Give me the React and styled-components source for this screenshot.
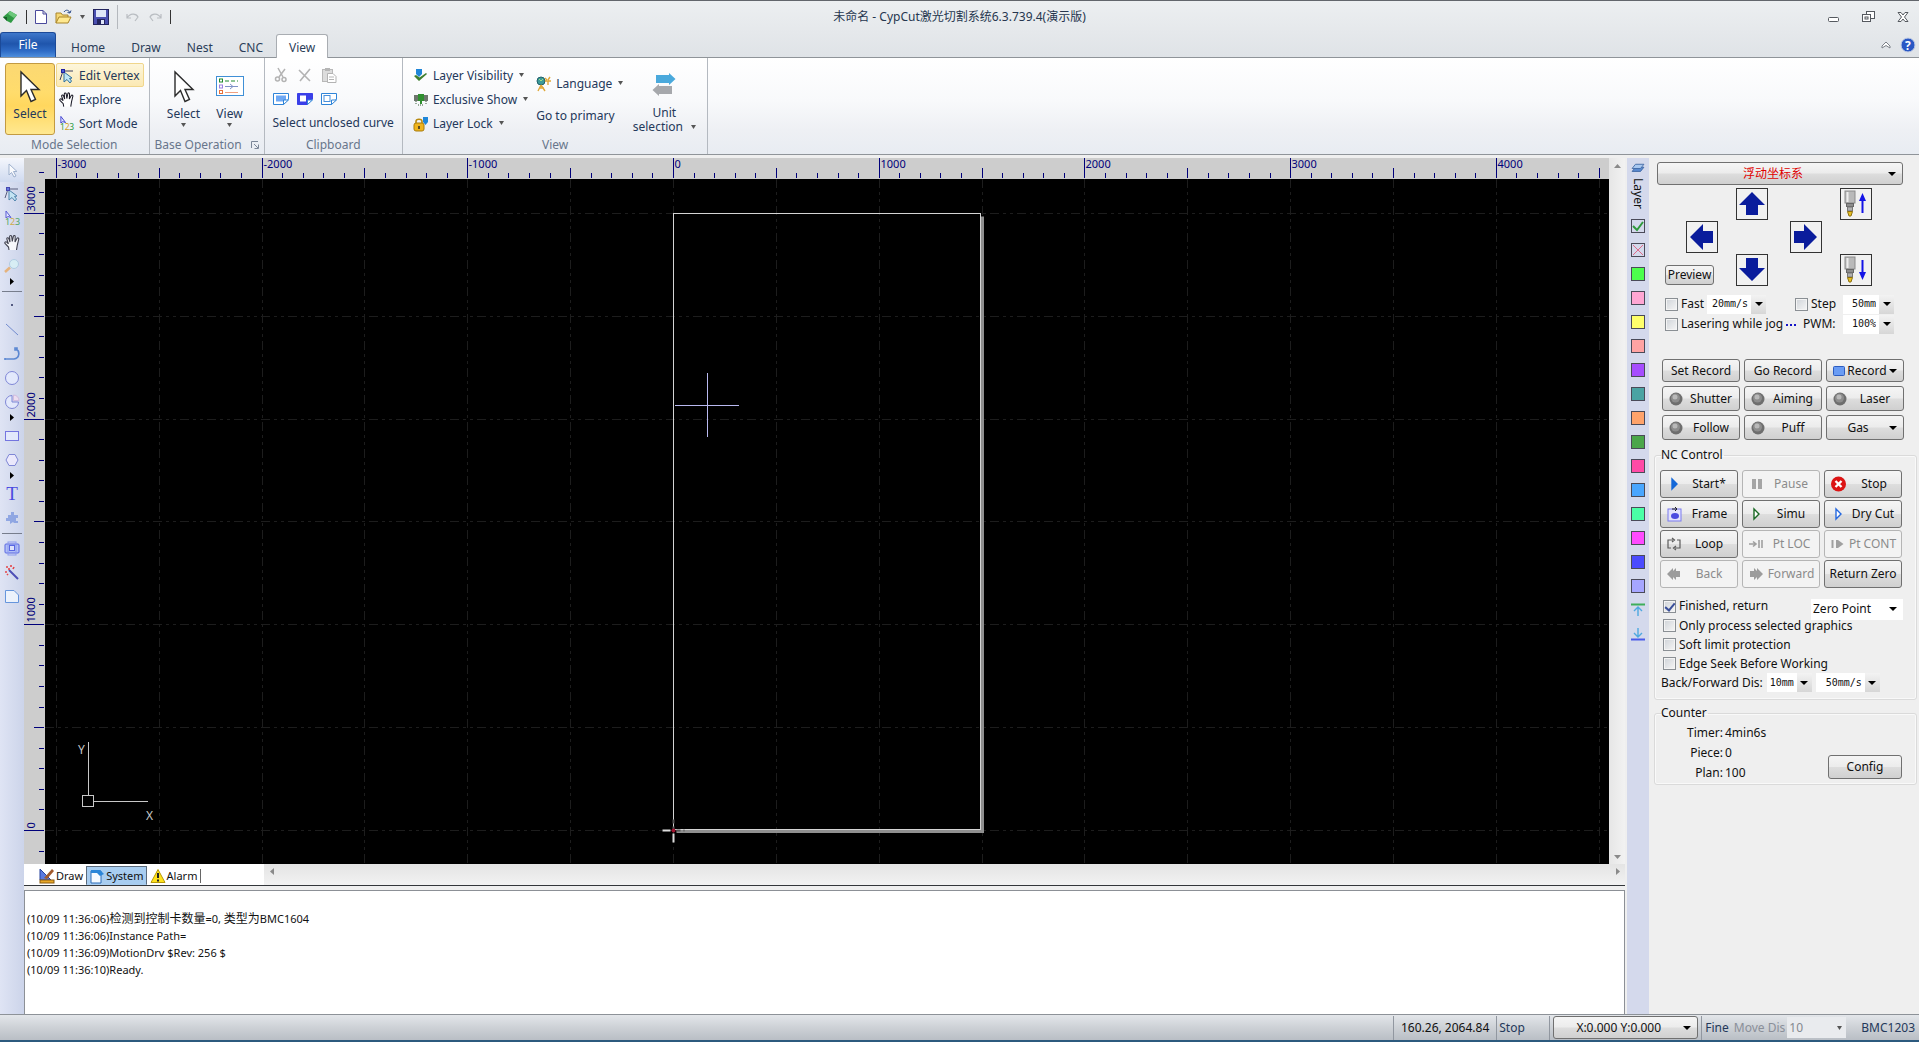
import React from 'react';
import styled, { createGlobalStyle } from 'styled-components';

const GlobalStyle = createGlobalStyle`
  * { box-sizing: border-box; }
  body {
    margin: 0;
    background: #efefef;
  }
  body, button, select, input {
    font-family: 'Noto Sans', 'Noto Sans CJK SC', sans-serif;
    font-size: 12px;
    line-height: 16px;
    color: #111;
  }
  button, select { margin: 0; padding: 0; }
`;

const Window = styled.div`
  display: flex;
  flex-direction: column;
  height: 100vh;
  overflow: hidden;
  border-top: 1px solid #62666c;
`;

/* ---------- title bar ---------- */
const TitleBar = styled.header`
  display: grid;
  grid-template-columns: 1fr auto 1fr;
  align-items: center;
  height: 32px;
  background: linear-gradient(#eceff1, #e5e8eb);
`;
const QuickBar = styled.div`
  display: flex;
  align-items: center;
  gap: 8px;
  padding-left: 2px;
`;
const PlainButton = styled.button`
  display: flex;
  align-items: center;
  justify-content: center;
  border: 0;
  background: none;
  color: #24385a;
`;
const Rule = styled.span`
  width: 1px;
  height: ${props => (props.$faint ? 24 : 14)}px;
  background: ${props => (props.$faint ? '#b4b8bd' : '#333')};
`;
const TitleText = styled.h1`
  margin: 0;
  font-size: 12px;
  font-weight: 400;
  color: #26364f;
`;
const WindowButtons = styled.div`
  display: flex;
  justify-content: flex-end;
  gap: 22px;
  padding-right: 10px;
`;

/* ---------- ribbon ---------- */
const TabRow = styled.nav`
  display: flex;
  align-items: flex-end;
  height: 25px;
  background: linear-gradient(#e5e8eb, #dfe3e7);
  border-bottom: 1px solid #8f9499;
`;
const FileTab = styled.button`
  width: 56px;
  height: 25px;
  border: 1px solid #1c4a98;
  border-bottom: 0;
  border-radius: 3px 3px 0 0;
  background: linear-gradient(#3f78cb, #1f55ac 45%, #2f6cc6 75%, #4f8fdd);
  color: #fff;
  margin-right: 2px;
`;
const Tab = styled.button`
  height: 24px;
  padding: 2px 12px 0;
  margin-bottom: -1px;
  border: 1px solid ${props => (props.$active ? '#a9adb2' : 'transparent')};
  border-bottom: 0;
  border-radius: 3px 3px 0 0;
  background: ${props => (props.$active ? '#fff' : 'none')};
  color: #2b3d58;
`;
const TabTools = styled.div`
  display: flex;
  align-items: center;
  gap: 9px;
  margin-left: auto;
  padding-right: 3px;
  height: 25px;
`;
const Ribbon = styled.section`
  display: flex;
  height: 97px;
  flex: none;
  background: linear-gradient(#fff, #f8f9fb 45%, #eef0f4 75%, #e8ecf2);
  border-bottom: 1px solid #8f9499;
`;
const Group = styled.div`
  display: flex;
  flex-direction: column;
  padding-top: 5px;
  border-right: 1px solid #b4b9c0;
`;
const GroupBody = styled.div`
  display: flex;
  height: 72px;
  padding: 0 ${props => props.$pad}px;
  gap: ${props => props.$gap || 0}px;
`;
const GroupLabel = styled.div`
  display: flex;
  justify-content: center;
  align-items: center;
  gap: 9px;
  height: 19px;
  color: #68768b;
`;
const Stack = styled.div`
  display: flex;
  flex-direction: column;
  justify-content: center;
  align-items: flex-start;
  gap: ${props => props.$gap || 0}px;
`;
const BigButton = styled.button`
  display: flex;
  flex-direction: column;
  align-items: center;
  width: ${props => props.$width}px;
  height: 72px;
  padding-top: 5px;
  border: 1px solid ${props => (props.$on ? '#c29a42' : 'transparent')};
  border-radius: 3px;
  background: ${props =>
    props.$on ? 'linear-gradient(#fbd873, #ffdc6c 40%, #ffd75e 60%, #ffe890)' : 'none'};
  color: #24385a;
`;
const BigIcon = styled.span`
  display: flex;
  align-items: center;
  justify-content: center;
  height: 34px;
  margin-bottom: 2px;
`;
const BigLabel = styled.span`
  display: flex;
  flex-direction: column;
  align-items: center;
  padding-top: ${props => (props.$tight ? 3 : 0)}px;
  line-height: ${props => (props.$tight ? 14 : 18)}px;
`;
const InlineArrow = styled.span`
  display: flex;
  align-items: center;
  gap: 8px;
`;
const SmallButton = styled.button`
  display: flex;
  align-items: center;
  gap: 4px;
  height: 24px;
  padding: 1px 3px 0 2px;
  border: 1px solid ${props => (props.$hot ? '#f0d68c' : 'transparent')};
  border-radius: 2px;
  background: ${props => (props.$hot ? 'linear-gradient(#fdf6dc, #fbe9b4)' : 'none')};
  color: #24385a;
  white-space: nowrap;
`;
const IconSlot = styled.span`
  display: flex;
  align-items: center;
  justify-content: center;
  width: 16px;
`;
const ArrowSlot = styled.span`
  display: flex;
  padding: 0 0 2px 2px;
`;
const IconRow = styled.div`
  display: flex;
  align-items: center;
  gap: 8px;
  height: 24px;
`;

/* ---------- work area ---------- */
const Main = styled.main`
  display: flex;
  flex: 1;
  min-height: 0;
  padding-top: 3px;
  background: #efefef;
`;
const ToolBar = styled.aside`
  width: 24px;
  flex: none;
  display: flex;
  flex-direction: column;
  align-items: center;
  background: linear-gradient(90deg, #dfe4f4, #ccd4ea);
`;
const Tool = styled.button`
  display: flex;
  align-items: center;
  justify-content: center;
  width: 24px;
  height: 24px;
  flex: none;
  border: 0;
  background: ${props => (props.$on ? 'linear-gradient(#f4f6fc, #cfdaf0)' : 'none')};
  > svg { opacity: 0.8; }
`;
const Flyout = styled.span`
  display: flex;
  align-items: flex-start;
  height: 10px;
  flex: none;
`;
const ToolRule = styled.span`
  width: 20px;
  height: 1px;
  flex: none;
  margin: 3px 0 2px;
  background: #777d8c;
`;
const Center = styled.div`
  flex: 1;
  min-width: 0;
  display: flex;
  flex-direction: column;
`;
const Board = styled.div`
  flex: 1;
  min-height: 0;
  display: grid;
  grid-template-columns: 21px 1fr 16px;
  grid-template-rows: 21px 1fr;
`;
const Ruler = styled.svg`
  display: block;
  width: 100%;
  height: 100%;
  background: #cdcdcd;
  grid-row: ${props => (props.$side ? '1 / 3' : '1')};
  font-size: 11px;
  overflow: hidden;
`;
const Drawing = styled.svg`
  display: block;
  width: 100%;
  height: 100%;
  background: #000;
  overflow: hidden;
`;
const VScroll = styled.div`
  grid-column: 3;
  grid-row: 1 / 3;
  display: flex;
  flex-direction: column;
  justify-content: space-between;
  align-items: center;
  padding: 6px 0 5px;
  background: linear-gradient(90deg, #e6e6e6, #f2f2f2);
`;
const SheetRow = styled.div`
  display: flex;
  flex: none;
  height: 22px;
  border-bottom: 1px solid #33363a;
`;
const Sheets = styled.div`
  display: flex;
  width: 240px;
  padding: 2px 0 0 12px;
  background: #fff;
`;
const Sheet = styled.button`
  display: flex;
  align-items: center;
  gap: 1px;
  padding: 0 2px;
  border: 1px solid transparent;
  border-color: ${props => (props.$on ? '#5b6b7c #5b6b7c transparent' : 'transparent')};
  background: ${props => (props.$on ? '#a8cdf0' : 'none')};
  font-size: 11px;
`;
const SheetEnd = styled.span`
  width: 1px;
  height: 14px;
  margin-top: 3px;
  background: #666;
`;
const HScroll = styled.div`
  flex: 1;
  display: flex;
  justify-content: space-between;
  padding: 4px 5px 0 6px;
  background: linear-gradient(#e4e4e4, #f2f2f2);
`;
const Log = styled.div`
  height: 124px;
  flex: none;
  margin-top: 4px;
  padding: 19px 0 0 2px;
  border: 1px solid #8c9096;
  border-bottom: 0;
  background: #fff;
`;
const LogLine = styled.p`
  margin: 0;
  font-size: 11px;
  line-height: 17px;
  white-space: pre;
`;
const Han = styled.span`
  font-size: 12px;
`;

/* ---------- layers ---------- */
const LayerBar = styled.aside`
  display: flex;
  flex-direction: column;
  align-items: center;
  gap: 10px;
  width: 22px;
  flex: none;
  margin-left: 2px;
  padding-top: 5px;
  background: #d4d9ec;
`;
const LayerHead = styled.div`
  display: flex;
  flex-direction: column;
  align-items: center;
  gap: 5px;
  height: 46px;
`;
const LayerTitle = styled.span`
  writing-mode: vertical-rl;
  line-height: 14px;
`;
const LayerButton = styled.button`
  display: flex;
  align-items: center;
  justify-content: center;
  width: 14px;
  height: 14px;
  flex: none;
  border: ${props => (props.$bare ? '0' : '1px solid #4a4a58')};
  background: ${props => props.$color || 'none'};
`;

/* ---------- control panel ---------- */
const Panel = styled.aside`
  width: 270px;
  flex: none;
  padding: 4px 2px 0 5px;
`;
const face = 'linear-gradient(#f5f5f5, #ececec 48%, #dddddd 52%, #d0d0d0)';
const ComboBox = styled.div`
  display: grid;
  grid-template-columns: 1fr 20px;
  align-items: center;
  flex: none;
  height: ${props => props.$height}px;
  width: ${props => props.$width}px;
  margin: ${props => props.$margin || 0};
  border: ${props => (props.$flat ? '0' : '1px solid #707070')};
  border-radius: ${props => (props.$flat ? 0 : 3)}px;
  background: ${props => (props.$flat ? props.$fill || '#fff' : face)};
  > select {
    grid-area: 1 / 1 / 2 / 3;
    appearance: none;
    width: 100%;
    height: 100%;
    border: 0;
    outline: 0;
    padding: 0 ${props => (props.$flat ? '20px 0 2px' : '14px 0 0')};
    background: none;
    color: ${props => props.$ink || '#111'};
    text-align-last: ${props => (props.$flat ? 'left' : 'center')};
  }
  > svg {
    grid-area: 1 / 2;
    justify-self: center;
    pointer-events: none;
  }
`;
const UnitBox = styled.div`
  display: grid;
  grid-template-columns: 1fr 15px;
  width: ${props => props.$width}px;
  height: 19px;
  background: #fff;
  > select {
    grid-area: 1 / 1 / 2 / 3;
    appearance: none;
    width: 100%;
    border: 0;
    padding: 0 18px 0 0;
    background: none;
    font-family: 'DejaVu Sans Mono', monospace;
    font-size: 10px;
    text-align-last: right;
  }
  > span {
    grid-area: 1 / 2;
    display: flex;
    align-items: center;
    justify-content: center;
    background: linear-gradient(#f3f3f3, #d6d6d6);
    pointer-events: none;
  }
`;
const JogGrid = styled.div`
  display: grid;
  grid-template-columns: 21px 50px 54px 50px 32px;
  grid-auto-rows: 33px;
  margin: 3px 0 7px 11px;
`;
const JogButton = styled.button`
  grid-column: ${props => props.$col};
  grid-row: ${props => props.$row};
  display: flex;
  align-items: center;
  justify-content: center;
  width: 32px;
  height: 32px;
  border: 1px solid #333;
  background: #f1f1f1;
`;
const PreviewButton = styled.button`
  grid-column: 1 / 3;
  grid-row: 3;
  align-self: end;
  width: 49px;
  height: 20px;
  margin-bottom: 2px;
  border: 1px solid #707070;
  border-radius: 3px;
  background: ${face};
`;
const JogOptions = styled.div`
  display: grid;
  grid-template-columns: 42px 88px 48px 51px;
  grid-auto-rows: 20px;
  align-items: center;
  margin: 0 0 25px 11px;
`;
const WideCell = styled.div`
  grid-column: 1 / 3;
  display: flex;
  align-items: center;
  gap: 3px;
`;
const MoreButton = styled.button`
  display: flex;
  border: 0;
  background: none;
`;
const PwmLabel = styled.label`
  padding-left: 8px;
`;
const Line = styled.div`
  display: flex;
  align-items: center;
  height: ${props => props.$height || 19}px;
  margin-top: ${props => props.$top || 0}px;
  padding-left: ${props => props.$indent || 0}px;
  gap: ${props => props.$gap || 0}px;
  white-space: nowrap;
`;
const Spacer = styled.span`
  flex: 1;
`;
const CheckLabel = styled.label`
  display: flex;
  align-items: center;
  gap: 3px;
  white-space: nowrap;
  > input {
    appearance: none;
    display: grid;
    place-items: center;
    width: 13px;
    height: 13px;
    margin: 0;
    border: 1px solid #8a8f94;
    background: linear-gradient(135deg, #cfd3d8, #f6f6f6);
    box-shadow: inset 0 0 0 1px #f4f4f4;
  }
  > input:checked::after {
    content: '';
    width: 4px;
    height: 8px;
    margin-bottom: 2px;
    border: solid #3a4f9a;
    border-width: 0 2px 2px 0;
    transform: rotate(40deg);
  }
`;
const ButtonGrid = styled.div`
  display: grid;
  grid-template-columns: repeat(3, 78px);
  gap: ${props => props.$gap}px 4px;
  padding-left: ${props => props.$indent}px;
`;
const PushButton = styled.button`
  display: flex;
  align-items: center;
  height: ${props => props.$height}px;
  padding: 0 ${props => (props.$drop ? 6 : 0)}px 0 ${props => (props.$icon ? 6 : 0)}px;
  border: 1px solid #707070;
  border-radius: 3px;
  background: ${face};
  white-space: nowrap;
  > span {
    flex: 1;
    text-align: center;
  }
  > svg { flex: none; }
  &:disabled {
    border-color: #b5b5b5;
    background: #f3f3f3;
    color: #8b8b8b;
  }
`;
const ConfigButton = styled(PushButton)`
  width: 74px;
  margin-bottom: 2px;
`;
const Box = styled.fieldset`
  margin: ${props => props.$top}px 0 0;
  padding: 0 0 ${props => props.$bottom}px;
  min-width: 0;
  border: 1px solid #dadada;
  border-radius: 3px;
  box-shadow: inset 0 0 0 1px #f9f9f9;
  > legend {
    margin-left: 6px;
    padding: 0 1px 0 0;
  }
`;
const NcBody = styled.div`
  padding-top: 7px;
`;
const Counts = styled.dl`
  display: grid;
  grid-template-columns: 68px 1fr;
  gap: 4px 2px;
  margin: 0;
  flex: 1;
  > dt { text-align: right; }
  > dd { margin: 0; }
`;
const CounterBody = styled.div`
  display: flex;
  align-items: flex-end;
  padding: 4px 14px 0 0;
`;

/* ---------- status bar ---------- */
const StatusBar = styled.footer`
  display: flex;
  flex: none;
  height: 28px;
  justify-content: flex-end;
  align-items: center;
  padding-right: 4px;
  border-top: 1px solid #8d9298;
  border-bottom: 2px solid #2c5a7e;
  background: linear-gradient(#e3e6ea, #cdd1d6 50%, #b9bec5);
  color: #24385a;
  white-space: nowrap;
`;
const StatusCell = styled.span`
  display: flex;
  align-items: center;
  height: 24px;
  min-width: ${props => props.$width}px;
  padding: 0 ${props => props.$pad}px;
  border-left: 1px solid #9197a0;
  color: ${props => (props.$dark ? '#111' : 'inherit')};
`;
const Dim = styled.label`
  margin: 0 2px;
  color: #8a8f99;
`;
const MoveBox = styled(ComboBox)`
  grid-template-columns: 1fr 14px;
  margin-right: 15px;
`;

/* ---------- drawings ---------- */
const Icon = ({ w = 16, h = 16, children }) => (
  <svg width={w} height={h} viewBox={`0 0 ${w} ${h}`} fill="none" aria-hidden="true">
    {children}
  </svg>
);
const Down = ({ color = '#000', w = 7 }) => (
  <Icon w={w} h={4}><path d={`M0 0H${w}L${w / 2} 4Z`} fill={color} /></Icon>
);
const Cursor = () => (
  <Icon w={22} h={33}>
    <path d="M2 2V26L7.5 20.5L12 31.5L16.5 29.5L12 19.5H20Z" fill="#fff" stroke="#2b2b2b" strokeWidth="1.4" />
  </Icon>
);
const VertexIcon = () => (
  <Icon>
    <path d="M4 3L1 12M4 3H14" stroke="#3a3f60" />
    <path d="M5 4V14L8 11.5L11 15L12.5 13L10.5 10.5L13 10Z" fill="#bfe6f5" stroke="#2f6f9c" />
    <rect x="2.5" y="1.5" width="3" height="3" fill="#4a62d8" stroke="#2222a0" />
  </Icon>
);
const HandIcon = () => (
  <Icon w={17} h={17}>
    <path
      d="M5 16L4.5 13L1 9.5C0.3 8 2 7.2 3 8.3L4.4 9.8L2.8 5C2.6 3.5 4.3 3.2 4.8 4.6L6 8L5.6 2.6C5.7 1.2 7.4 1.2 7.7 2.6L8.3 7.5L9.4 2.2C9.8 1 11.3 1.4 11.2 2.8L11 8L13 4.3C13.8 3.3 15 4 14.7 5.3L13.3 11L12.5 16"
      fill="#fff" stroke="#1b1b28" strokeWidth="1.1"
    />
  </Icon>
);
const SortIcon = () => (
  <Icon w={17} h={17}>
    <path d="M2 1V8L4 6.5L7 7.5Z" fill="#e8ecff" stroke="#3b3bd0" />
    <g fontFamily="Noto Sans" fontSize="9">
      <text x="1" y="15" fill="#2e9a3c">1</text>
      <text x="6" y="15" fill="#d0a020">2</text>
      <text x="11" y="15" fill="#2e9a3c">3</text>
    </g>
  </Icon>
);
const ViewIcon = () => (
  <Icon w={28} h={20}>
    <rect x="0.5" y="0.5" width="27" height="19" fill="#fff" stroke="#3f8fd6" />
    <rect x="3.5" y="3" width="3" height="3" stroke="#1f8a2c" />
    <rect x="3.5" y="9" width="3" height="3" stroke="#9a7fe0" />
    <rect x="3.5" y="14.5" width="3" height="3" stroke="#e8703a" />
    <path d="M9 5H22" stroke="#1f8a2c" strokeDasharray="4 2" />
    <path d="M9 10.5H22M14 8L17 10.5L14 13" stroke="#7f93c8" />
    <path d="M9 16.5H22" stroke="#f0a080" />
  </Icon>
);
const Scissors = () => (
  <Icon>
    <path d="M5 1L10 10M12 2L6 10" stroke="#b3b3b3" strokeWidth="1.5" />
    <circle cx="4.5" cy="12" r="2" stroke="#b3b3b3" strokeWidth="1.5" />
    <circle cx="11" cy="12.5" r="2" stroke="#b3b3b3" strokeWidth="1.5" />
  </Icon>
);
const CrossIcon = () => (
  <Icon><path d="M2 3L13 14M13 2L3 14" stroke="#b3b3b3" strokeWidth="1.6" /></Icon>
);
const Paste = () => (
  <Icon>
    <rect x="1.5" y="2.5" width="10" height="12" fill="#dcdcdc" stroke="#b8b8b8" />
    <rect x="4" y="1" width="5" height="3" fill="#b5b5b5" />
    <path d="M6.5 6.5H12L15 9.5V15.5H6.5Z" fill="#fff" stroke="#b3b3b3" />
    <path d="M8 10H13M8 12.5H13" stroke="#b5b5b5" />
  </Icon>
);
const PageIcon = ({ kind }) => (
  <Icon w={16} h={12}>
    <path d="M.5 .5H15.5V6L10.5 11.5H.5Z" fill={kind === 'solid' ? '#3a3fe8' : '#fff'} stroke={kind === 'solid' ? '#3a3fe8' : '#2f84d8'} />
    <rect x="3" y="2.5" width={kind === 'fill' ? 10 : 6} height="6" fill={kind === 'fill' ? '#6ea8f4' : '#fff'} stroke={kind === 'line' ? '#4a90dc' : 'none'} />
    <path d="M10.5 11.5V7H15.5Z" fill="#fff" stroke="#2f84d8" />
  </Icon>
);
const VisibilityIcon = () => (
  <Icon>
    <path d="M3 1H9V6L6 9L3 6Z" fill="#1f86d8" />
    <path d="M1 8L6 13L14 6L13 5L6.5 9.5L3 7Z" fill="#3f7f2f" />
  </Icon>
);
const TreesIcon = () => (
  <Icon>
    <path d="M1 3H5V9H1ZM11 3H15V9H11Z" fill="#6d756d" />
    <path d="M5 2H11V9H9V12H7V9H5Z" fill="#2f8f2f" />
    <path d="M3 9V12M13 9V12M5 13H11" stroke="#3b5f3b" strokeDasharray="1 1" />
  </Icon>
);
const LockIcon = () => (
  <Icon>
    <path d="M10 1H15V6L12.5 9L10 6Z" fill="#1f86d8" />
    <path d="M3 8V5.5C3 2.5 9 2.5 9 5.5V8" stroke="#b98a10" strokeWidth="1.6" />
    <rect x="1" y="7" width="10" height="8" rx="2" fill="#f0b41c" stroke="#a97c0c" />
    <path d="M6 10V13" stroke="#222" strokeWidth="1.4" />
  </Icon>
);
const LanguageIcon = () => (
  <Icon>
    <circle cx="5" cy="5" r="4" fill="#3c9a9a" stroke="#22606a" />
    <path d="M3 3L5 5L7 3" stroke="#9be08a" />
    <path d="M9 2L11 4M14 1L12 4M9 5H15M12 5V9M5 9L2 15M5 9L9 15M3 12H8" stroke="#e0a83a" strokeWidth="1.4" />
  </Icon>
);
const UnitIcon = () => (
  <Icon w={24} h={26}>
    <path d="M4 3H17V1L23.5 7L17 13V11H4Z" fill="#4aa9dc" />
    <path d="M20 14H7V12L.5 18L7 24V22H20Z" fill="#a6a8ac" />
  </Icon>
);
const LogoIcon = () => (
  <Icon>
    <path d="M1 8L8 2L15 6L9 14L5 12Z" fill="#2f9a44" />
    <path d="M8 2L15 6L12 9L6 5Z" fill="#6cc87c" />
    <path d="M1 8L5 12V8Z" fill="#17602a" />
  </Icon>
);
const NewIcon = () => (
  <Icon w={12} h={14}>
    <path d="M.5 .5H8L11.5 4V13.5H.5ZM8 .5V4H11.5" fill="#fff" stroke="#4a4a9c" />
  </Icon>
);
const OpenIcon = () => (
  <Icon w={17}>
    <path d="M1 14V4H6L7.5 6H13V8" fill="#f4d774" stroke="#a8842a" />
    <path d="M1 14L4 8H16L13 14Z" fill="#ffe990" stroke="#a8842a" />
    <path d="M9 3C11 0 14 1 15 4M15 4L12.5 3.5M15 4L16 1.5" stroke="#2a4a8a" />
  </Icon>
);
const SaveIcon = () => (
  <Icon>
    <rect x=".5" y=".5" width="15" height="15" fill="#4a4fb0" stroke="#23245e" />
    <rect x="3" y="1" width="10" height="7" fill="#dfe6f8" />
    <rect x="4" y="10" width="8" height="5" fill="#23245e" />
    <rect x="8" y="11" width="3" height="4" fill="#dfe6f8" />
  </Icon>
);
const UndoIcon = ({ flip }) => (
  <Icon w={14} h={10}>
    <path d={flip ? 'M13 2V6H9M13 6C10 1 4 1 2 5L5 9' : 'M1 2V6H5M1 6C4 1 10 1 12 5L9 9'} stroke="#b9bdc2" strokeWidth="1.2" />
  </Icon>
);

const arrows = {
  up: 'M13 0L26 13H19V23H7V13H0Z',
  down: 'M13 23L26 10H19V0H7V10H0Z',
  left: 'M0 13L13 0V7H23V19H13V26Z',
  right: 'M23 13L10 0V7H0V19H10V26Z',
};
const JogArrow = ({ dir }) => (
  <Icon w={26} h={26}>
    <path d={arrows[dir]} fill="#0a1c9c" transform={dir === 'up' || dir === 'down' ? 'translate(0 1)' : 'translate(1 0)'} />
  </Icon>
);
const Nozzle = ({ up }) => (
  <Icon w={24} h={28}>
    <rect x="1" y="1" width="10" height="12" fill="#b9b9b9" stroke="#8b8b8b" />
    <path d="M3.5 2V12" stroke="#ededed" strokeWidth="2" />
    <rect x="2.5" y="13.5" width="7" height="3" fill="#8d8d8d" stroke="#666" />
    <rect x="3.5" y="17" width="5" height="4" fill="#b0b0b0" stroke="#777" />
    <path d="M3.5 21.5H8.5L7 26H5Z" fill="#e6be22" stroke="#8d7010" />
    <path d={up ? 'M18.5 6V23' : 'M18.5 4V21'} stroke="#1414e6" strokeWidth="2" />
    <path d={up ? 'M18.5 3L22 11H15Z' : 'M18.5 24L22 16H15Z'} fill="#1414e6" />
  </Icon>
);
const Ball = () => (
  <Icon w={14} h={14}>
    <circle cx="7" cy="7" r="6.5" fill="#6e6e6e" />
    <circle cx="6.5" cy="6" r="4.5" fill="#8d8d8d" />
    <circle cx="6" cy="5" r="2.5" fill="#b9b9b9" />
  </Icon>
);
const Play = ({ color, solid }) => (
  <Icon w={14} h={14}><path d="M5 2V12L10 7Z" stroke={color} strokeWidth="1.4" fill={solid ? color : '#fff'} /></Icon>
);
const PauseIcon = () => (
  <Icon w={14} h={14}><path d="M3 2H7V12H3ZM9 2H13V12H9Z" fill="#a5a5a5" /></Icon>
);
const StopIcon = () => (
  <Icon>
    <circle cx="7.5" cy="8" r="7.5" fill="#dc1414" />
    <path d="M4.5 5L10.5 11M10.5 5L4.5 11" stroke="#fff" strokeWidth="2.4" />
  </Icon>
);
const FrameIcon = () => (
  <Icon w={15} h={15}>
    <rect x="1" y="2" width="13" height="12" fill="#e3e3fb" stroke="#7a7af0" />
    <ellipse cx="8" cy="9" rx="4" ry="3" fill="#4c4ce0" />
    <path d="M5 2H9M8 0L10 2L8 4" stroke="#222" />
  </Icon>
);
const LoopIcon = () => (
  <Icon w={14} h={14}>
    <path d="M6 3H1V11H4M8 11H13V3H10M5 1L7.5 3L5 5M9 9L6.5 11L9 13" stroke="#5b5b5b" strokeWidth="1.2" />
  </Icon>
);
const LocIcon = () => (
  <Icon w={15} h={12}><path d="M0 6H6M4 3.5L7 6L4 8.5M10 2V10M13 2V10" stroke="#a0a0a0" strokeWidth="1.6" /></Icon>
);
const ContIcon = () => (
  <Icon w={13} h={12}>
    <path d="M1.5 2V10" stroke="#a0a0a0" strokeWidth="2" />
    <path d="M5 2H7V10H5ZM7 2L12.5 6L7 10Z" fill="#a0a0a0" />
  </Icon>
);
const SkipIcon = ({ back }) => (
  <Icon w={14} h={14}>
    <path d={back ? 'M0 7L6 1V4L9 1V4H13V10H9V13L6 10V13Z' : 'M14 7L8 1V4L5 1V4H1V10H5V13L8 10V13Z'} fill="#9c9c9c" />
  </Icon>
);
const RecordIcon = () => (
  <Icon w={12} h={10}><rect x=".5" y=".5" width="11" height="9" rx="1" fill="#6a9cf4" stroke="#2c5cc0" /></Icon>
);
const DotsIcon = () => (
  <Icon w={11} h={3}><path d="M0 1H2V3H0ZM4 1H6V3H4ZM8 1H10V3H8Z" fill="#1414c8" /></Icon>
);

const toolIcons = {
  select: <path d="M5 2V13L7.5 10.5L10 15L12 14L9.5 9.5H13Z" fill="#fff" stroke="#8fa4c4" />,
  zoom: (
    <>
      <path d="M1 14L6 9.5" stroke="#e8a860" strokeWidth="2.5" />
      <circle cx="10" cy="6" r="4.5" fill="#d8f2f6" stroke="#a9c8e0" />
    </>
  ),
  dot: <rect x="7" y="6" width="2" height="2" fill="#333a66" />,
  line: <path d="M2 2L14 13" stroke="#5a78c8" />,
  arc: <path d="M1 13H10C16 12 16 5 12 3M1 12V14M11 2H13V4H11Z" stroke="#3f74cc" strokeWidth="1.6" />,
  circle: <circle cx="8" cy="8" r="6.5" fill="#e6ecff" stroke="#6a72d0" />,
  pie: (
    <>
      <path d="M8 8V1.5A6.5 6.5 0 1 0 14.5 8Z" fill="#e6ecff" stroke="#6a72d0" />
      <path d="M9.5 1A6 6 0 0 1 15 6.5H9.5Z" fill="#f3dff0" stroke="#d0b4dc" />
    </>
  ),
  rect: <rect x="1.5" y="3.5" width="13" height="9" fill="#e6ecff" stroke="#5c5cdc" />,
  hexagon: <path d="M5 2.5H11L14 8L11 13.5H5L2 8Z" fill="#f0ecff" stroke="#6a72d0" />,
  star: <path d="M7 2H10V5H14V8H12V11H14V13H10L9 12L6 14V11H2V8H4V5H7Z" fill="#7f9ae0" />,
  group: (
    <>
      <rect x="1" y="4" width="14" height="9" rx="1" fill="#a9b8f8" stroke="#3a4ae0" />
      <rect x="4" y="2" width="8" height="13" stroke="#7a8af0" />
      <rect x="5.5" y="5.5" width="5" height="5" fill="#dfe4ff" stroke="#3a4ae0" />
    </>
  ),
  wand: (
    <>
      <path d="M5 6L14 15" stroke="#2c2ca8" strokeWidth="2" />
      <path d="M2 3H4M7 1V3M1 8H3M10 3L9 5M3 11L4 10M5 4V6" stroke="#e82020" strokeWidth="1.6" />
    </>
  ),
  doc: <path d="M1.5 2.5H10L14.5 7V14.5H1.5Z" fill="#f2f8ff" stroke="#4a84d8" />,
};
const ToolIcon = ({ name }) => <Icon>{toolIcons[name]}</Icon>;
const TextIcon = styled.span`
  font-family: 'Liberation Serif', serif;
  font-size: 19px;
  line-height: 20px;
  color: #4a4ae0;
`;
const FlyoutArrow = () => (
  <Flyout><Icon w={4} h={7}><path d="M0 0L4 3.5L0 7Z" fill="#000" /></Icon></Flyout>
);

/* ---------- board ---------- */
const STEP = 20.57; // screen px for 100 mm
const ORIGIN = { x: 628, y: 651 };
const RULER = 21;
const range = (from, to) => Array.from({ length: to - from + 1 }, (_, i) => from + i);
const px = (origin, n) => Math.round(origin + n * STEP) + 0.5;
const tickSize = n => (n % 10 === 0 ? 20 : n % 5 === 0 ? 10 : 5);

const TopRuler = () => (
  <Ruler>
    {range(-30, 45).map(n => (
      <g key={n}>
        <path d={`M${px(ORIGIN.x, n)} 20V${20 - tickSize(n)}`} stroke="#00007a" />
        {n % 10 === 0 && (
          <text x={px(ORIGIN.x, n) + 1} y="10" fill="#00007a">{n * 100}</text>
        )}
      </g>
    ))}
  </Ruler>
);
const SideRuler = () => (
  <Ruler $side>
    {range(-1, 32).map(n => {
      const y = px(ORIGIN.y + RULER, -n);
      return (
        <g key={n}>
          <path d={`M20 ${y}H${20 - tickSize(n)}`} stroke="#00007a" />
          {n % 10 === 0 && (
            <text transform={`translate(11 ${y - 2}) rotate(-90)`} fill="#00007a">{n * 100}</text>
          )}
        </g>
      );
    })}
  </Ruler>
);
const Canvas = () => {
  const left = px(ORIGIN.x, 0);
  const bottom = px(ORIGIN.y, 0);
  const right = px(ORIGIN.x, 15) - 2;
  const top = px(ORIGIN.y, -30);
  return (
    <Drawing>
      <g stroke="#1d1d1d" strokeDasharray="9 4 3 4 3 4">
        {range(-6, 9).map(n => (
          <line key={n} x1={px(ORIGIN.x, n * 5)} x2={px(ORIGIN.x, n * 5)} y1="0" y2="100%" />
        ))}
        {range(0, 6).map(n => (
          <line key={n} y1={px(ORIGIN.y, -n * 5)} y2={px(ORIGIN.y, -n * 5)} x1="0" x2="100%" />
        ))}
      </g>
      <path d={`M${right + 2} ${top + 3}V${bottom + 1}H${left + 3}`} stroke="#8f8f8f" strokeWidth="3" fill="none" />
      <rect x={left} y={top} width={right - left} height={bottom - top - 1} fill="none" stroke="#d4d4d4" />
      <path d={`M${left - 11} ${bottom}H${left - 3}M${left} ${bottom + 3}V${bottom + 12}`} stroke="#ddd" strokeWidth="2" />
      <path d={`M${left} ${bottom - 11}V${bottom}H${left + 11}`} stroke="#555" fill="none" strokeWidth="2" strokeDasharray="4 3" />
      <circle cx={left} cy={bottom} r="2" fill="#a0102c" />
      <path d="M630 226.5H694M662.5 194V258" stroke="#b9b9f0" />
      <g stroke="#c8c8c8" fill="none">
        <rect x="37.5" y="616.5" width="11" height="11" />
        <path d="M43.5 616V563M49 622.5H103" />
      </g>
      <g fill="#c8c8c8" fontSize="12">
        <text x="33" y="575">Y</text>
        <text x="101" y="641">X</text>
      </g>
    </Drawing>
  );
};

const layerColors = [
  '#4dff4d', '#ffa6d3', '#ffff6b', '#ffa3a3', '#a64dff', '#4aa3a3', '#ffa36b',
  '#4aa64a', '#ff4aa6', '#4aa6ff', '#4affa6', '#ff4aff', '#4a4aff', '#a6a6ff',
];

const Combo = ({ label, value, ...rest }) => (
  <ComboBox {...rest}>
    <select aria-label={label}>
      <option>{value}</option>
    </select>
    <Down w={8} />
  </ComboBox>
);
const Unit = ({ label, value, width, id }) => (
  <UnitBox $width={width}>
    <select id={id} aria-label={label}>
      <option>{value}</option>
    </select>
    <span><Down w={8} /></span>
  </UnitBox>
);
const Check = ({ children, checked }) => (
  <CheckLabel>
    <input type="checkbox" defaultChecked={checked} />
    {children}
  </CheckLabel>
);
const Push = ({ icon, children, height, disabled, drop }) => (
  <PushButton $height={height} $icon={!!icon} $drop={drop} disabled={disabled}>
    {icon}
    <span>{children}</span>
    {drop && <Down w={8} />}
  </PushButton>
);
const RibbonItem = ({ icon, children, hot, drop }) => (
  <SmallButton $hot={hot}>
    {icon && <IconSlot>{icon}</IconSlot>}
    {children}
    {drop && <ArrowSlot><Down w={5} color="#555" /></ArrowSlot>}
  </SmallButton>
);

export default () => {
  return (
    <>
      <GlobalStyle />
      <Window>
        <TitleBar>
          <QuickBar>
            <LogoIcon />
            <Rule />
            <PlainButton aria-label="New"><NewIcon /></PlainButton>
            <PlainButton aria-label="Open"><OpenIcon /></PlainButton>
            <Down w={5} color="#555" />
            <PlainButton aria-label="Save"><SaveIcon /></PlainButton>
            <Rule $faint />
            <PlainButton aria-label="Undo"><UndoIcon /></PlainButton>
            <PlainButton aria-label="Redo"><UndoIcon flip /></PlainButton>
            <Rule />
          </QuickBar>
          <TitleText>未命名 - CypCut激光切割系统6.3.739.4(演示版)</TitleText>
          <WindowButtons>
            <PlainButton aria-label="Minimize">
              <Icon w={12} h={12}><rect x=".5" y="6.5" width="10" height="4" rx="1" fill="#fff" stroke="#55595f" /></Icon>
            </PlainButton>
            <PlainButton aria-label="Restore">
              <Icon w={13} h={12}>
                <rect x="4.5" y=".5" width="8" height="7" fill="#fff" stroke="#55595f" />
                <rect x=".5" y="3.5" width="8" height="7" fill="#fff" stroke="#55595f" />
                <rect x="3" y="6" width="3" height="2" stroke="#55595f" />
              </Icon>
            </PlainButton>
            <PlainButton aria-label="Close">
              <Icon w={12} h={11}>
                <path d="M1 .5H4L6 3L8 .5H11L7.5 5L11 9.5H8L6 7L4 9.5H1L4.5 5Z" fill="#fff" stroke="#55595f" />
              </Icon>
            </PlainButton>
          </WindowButtons>
        </TitleBar>

        <TabRow>
          <FileTab>File</FileTab>
          <Tab>Home</Tab>
          <Tab>Draw</Tab>
          <Tab>Nest</Tab>
          <Tab>CNC</Tab>
          <Tab $active>View</Tab>
          <TabTools>
            <PlainButton aria-label="Collapse">
              <Icon w={10} h={8}><path d="M1 5L5 1L9 5V7L5 4.5L1 7Z" fill="#fff" stroke="#7b8087" /></Icon>
            </PlainButton>
            <PlainButton aria-label="Help">
              <Icon>
                <circle cx="8" cy="8" r="7" fill="#2a58c4" stroke="#c4cfe6" />
                <text x="5" y="12.5" fontSize="12" fontWeight="700" fill="#fff">?</text>
              </Icon>
            </PlainButton>
          </TabTools>
        </TabRow>

        <Ribbon>
          <Group>
            <GroupBody $pad={5} $gap={1}>
              <BigButton $on $width={50}>
                <BigIcon><Cursor /></BigIcon>
                <BigLabel>Select</BigLabel>
              </BigButton>
              <Stack>
                <RibbonItem hot icon={<VertexIcon />}>Edit Vertex</RibbonItem>
                <RibbonItem icon={<HandIcon />}>Explore</RibbonItem>
                <RibbonItem icon={<SortIcon />}>Sort Mode</RibbonItem>
              </Stack>
            </GroupBody>
            <GroupLabel>Mode Selection</GroupLabel>
          </Group>
          <Group>
            <GroupBody $pad={11}>
              <BigButton $width={46}>
                <BigIcon><Cursor /></BigIcon>
                <BigLabel>Select<Down w={5} color="#555" /></BigLabel>
              </BigButton>
              <BigButton $width={46}>
                <BigIcon><ViewIcon /></BigIcon>
                <BigLabel>View<Down w={5} color="#555" /></BigLabel>
              </BigButton>
            </GroupBody>
            <GroupLabel>
              Base Operation
              <Icon w={8} h={8}><path d="M.5 7V.5H7M3 3L7 7M7.5 3.5V7.5H3.5" stroke="#7c8798" /></Icon>
            </GroupLabel>
          </Group>
          <Group>
            <GroupBody $pad={8}>
              <Stack>
                <IconRow>
                  <PlainButton aria-label="Cut"><Scissors /></PlainButton>
                  <PlainButton aria-label="Delete"><CrossIcon /></PlainButton>
                  <PlainButton aria-label="Paste"><Paste /></PlainButton>
                </IconRow>
                <IconRow>
                  <PlainButton aria-label="Select all"><PageIcon kind="fill" /></PlainButton>
                  <PlainButton aria-label="Invert"><PageIcon kind="solid" /></PlainButton>
                  <PlainButton aria-label="Deselect"><PageIcon kind="line" /></PlainButton>
                </IconRow>
                <IconRow>
                  <PlainButton>Select unclosed curve</PlainButton>
                </IconRow>
              </Stack>
            </GroupBody>
            <GroupLabel>Clipboard</GroupLabel>
          </Group>
          <Group>
            <GroupBody $pad={7} $gap={1}>
              <Stack>
                <RibbonItem drop icon={<VisibilityIcon />}>Layer Visibility</RibbonItem>
                <RibbonItem drop icon={<TreesIcon />}>Exclusive Show</RibbonItem>
                <RibbonItem drop icon={<LockIcon />}>Layer Lock</RibbonItem>
              </Stack>
              <Stack $gap={8}>
                <RibbonItem drop icon={<LanguageIcon />}>Language</RibbonItem>
                <RibbonItem>Go to primary</RibbonItem>
              </Stack>
              <BigButton $width={72}>
                <BigIcon><UnitIcon /></BigIcon>
                <BigLabel $tight>
                  Unit
                  <InlineArrow>selection<Down w={5} color="#555" /></InlineArrow>
                </BigLabel>
              </BigButton>
            </GroupBody>
            <GroupLabel>View</GroupLabel>
          </Group>
        </Ribbon>

        <Main>
          <ToolBar>
            <Tool $on aria-label="Select"><ToolIcon name="select" /></Tool>
            <Tool aria-label="Edit vertex"><VertexIcon /></Tool>
            <Tool aria-label="Sort"><SortIcon /></Tool>
            <Tool aria-label="Pan"><HandIcon /></Tool>
            <Tool aria-label="Zoom"><ToolIcon name="zoom" /></Tool>
            <FlyoutArrow />
            <ToolRule />
            {['dot', 'line', 'arc', 'circle', 'pie'].map(name => (
              <Tool key={name} aria-label={name}><ToolIcon name={name} /></Tool>
            ))}
            <FlyoutArrow />
            <Tool aria-label="Rectangle"><ToolIcon name="rect" /></Tool>
            <Tool aria-label="Polygon"><ToolIcon name="hexagon" /></Tool>
            <FlyoutArrow />
            <Tool aria-label="Text"><TextIcon>T</TextIcon></Tool>
            <Tool aria-label="Part"><ToolIcon name="star" /></Tool>
            <ToolRule />
            {['group', 'wand', 'doc'].map(name => (
              <Tool key={name} aria-label={name}><ToolIcon name={name} /></Tool>
            ))}
          </ToolBar>

          <Center>
            <Board>
              <SideRuler />
              <TopRuler />
              <Canvas />
              <VScroll>
                <Icon w={7} h={4}><path d="M0 4H7L3.5 0Z" fill="#8a8a8a" /></Icon>
                <Down color="#8a8a8a" />
              </VScroll>
            </Board>
            <SheetRow>
              <Sheets>
                <Sheet>
                  <Icon>
                    <path d="M1 1V12H12Z" fill="#5a7ae0" stroke="#24409c" />
                    <path d="M5 10L13 1L15 3L8 11Z" fill="#a05a2c" />
                    <rect x="1" y="12" width="14" height="3" fill="#e8a828" stroke="#8c5c10" />
                  </Icon>
                  Draw
                </Sheet>
                <Sheet $on>
                  <Icon>
                    <path d="M2 3H12V15H2Z" fill="#f4faff" stroke="#2a6cb8" />
                    <path d="M2 2H11L15 6L11 8L8 5H2Z" fill="#2a86d8" />
                  </Icon>
                  System
                </Sheet>
                <Sheet>
                  <Icon>
                    <path d="M8 1.5L15 14.5H1Z" fill="#ffe21c" stroke="#b89a08" strokeLinejoin="round" />
                    <path d="M8 5V10M8 11.5V13.5" stroke="#222" strokeWidth="2" />
                  </Icon>
                  Alarm
                </Sheet>
                <SheetEnd />
              </Sheets>
              <HScroll>
                <Icon w={4} h={7}><path d="M4 0V7L0 3.5Z" fill="#8a8a8a" /></Icon>
                <Icon w={4} h={7}><path d="M0 0V7L4 3.5Z" fill="#8a8a8a" /></Icon>
              </HScroll>
            </SheetRow>
            <Log>
              <LogLine>(10/09 11:36:06)<Han>检测到控制卡数量</Han>=0, <Han>类型为</Han>BMC1604</LogLine>
              <LogLine>(10/09 11:36:06)Instance Path=</LogLine>
              <LogLine>(10/09 11:36:09)MotionDrv $Rev: 256 $</LogLine>
              <LogLine>(10/09 11:36:10)Ready.</LogLine>
            </Log>
          </Center>

          <LayerBar>
            <LayerHead>
              <Icon h={12}>
                <path d="M1 10L5 5H15L11 10Z" fill="#5a8ad0" stroke="#3a62a0" />
                <path d="M1 6.5L5 1.5H15L11 6.5Z" fill="#a9c8f0" stroke="#3a62a0" />
              </Icon>
              <LayerTitle>Layer</LayerTitle>
            </LayerHead>
            <LayerButton aria-label="Show all">
              <Icon w={12} h={12}><path d="M1 6L5 10L11 2" stroke="#2f9a3c" strokeWidth="2" /></Icon>
            </LayerButton>
            <LayerButton aria-label="Hide all">
              <Icon w={12} h={12}><path d="M1 1L11 11M11 1L1 11" stroke="#e06a8a" /></Icon>
            </LayerButton>
            {layerColors.map((color, i) => (
              <LayerButton key={color} $color={color} aria-label={`Layer ${i + 1}`} />
            ))}
            <LayerButton $bare aria-label="Bring to top">
              <Icon w={14} h={14}>
                <path d="M0 1.5H14" stroke="#3fae5a" strokeWidth="2" />
                <path d="M7 13V4M3 8L7 4L11 8" stroke="#4fa8e0" strokeWidth="1.4" />
              </Icon>
            </LayerButton>
            <LayerButton $bare aria-label="Send to bottom">
              <Icon w={14} h={14}>
                <path d="M0 12.5H14" stroke="#4a5ae8" strokeWidth="2" />
                <path d="M7 1V10M3 6L7 10L11 6" stroke="#4fa8e0" strokeWidth="1.4" />
              </Icon>
            </LayerButton>
          </LayerBar>

          <Panel>
            <Combo label="Coordinate system" value="浮动坐标系" $height={23} $ink="#e00000" $width={246} $margin="0 0 0 3px" />
            <JogGrid>
              <JogButton $col={3} $row={1} aria-label="Up"><JogArrow dir="up" /></JogButton>
              <JogButton $col={2} $row={2} aria-label="Left"><JogArrow dir="left" /></JogButton>
              <JogButton $col={4} $row={2} aria-label="Right"><JogArrow dir="right" /></JogButton>
              <JogButton $col={3} $row={3} aria-label="Down"><JogArrow dir="down" /></JogButton>
              <JogButton $col={5} $row={1} aria-label="Nozzle up"><Nozzle up /></JogButton>
              <JogButton $col={5} $row={3} aria-label="Nozzle down"><Nozzle /></JogButton>
              <PreviewButton>Preview</PreviewButton>
            </JogGrid>
            <JogOptions>
              <Check>Fast</Check>
              <Unit label="Fast speed" value="20mm/s" width={59} />
              <Check>Step</Check>
              <Unit label="Step length" value="50mm" width={51} />
              <WideCell>
                <Check>Lasering while jog</Check>
                <MoreButton aria-label="More"><DotsIcon /></MoreButton>
              </WideCell>
              <PwmLabel htmlFor="pwm">PWM:</PwmLabel>
              <Unit id="pwm" value="100%" width={51} />
            </JogOptions>
            <ButtonGrid $indent={8} $gap={4}>
              <Push height={23}>Set Record</Push>
              <Push height={23}>Go Record</Push>
              <Push height={23} drop icon={<RecordIcon />}>Record</Push>
              <Push height={25} icon={<Ball />}>Shutter</Push>
              <Push height={25} icon={<Ball />}>Aiming</Push>
              <Push height={25} icon={<Ball />}>Laser</Push>
              <Push height={25} icon={<Ball />}>Follow</Push>
              <Push height={25} icon={<Ball />}>Puff</Push>
              <Push height={25} drop>Gas</Push>
            </ButtonGrid>

            <Box $top={7} $bottom={7}>
              <legend>NC Control</legend>
              <NcBody>
                <ButtonGrid $indent={5} $gap={2}>
                  <Push height={28} icon={<Play color="#1468d8" solid />}>Start*</Push>
                  <Push height={28} disabled icon={<PauseIcon />}>Pause</Push>
                  <Push height={28} icon={<StopIcon />}>Stop</Push>
                  <Push height={28} icon={<FrameIcon />}>Frame</Push>
                  <Push height={28} icon={<Play color="#1a6a24" />}>Simu</Push>
                  <Push height={28} icon={<Play color="#2468e0" />}>Dry Cut</Push>
                  <Push height={28} icon={<LoopIcon />}>Loop</Push>
                  <Push height={28} disabled icon={<LocIcon />}>Pt LOC</Push>
                  <Push height={28} disabled icon={<ContIcon />}>Pt CONT</Push>
                  <Push height={28} disabled icon={<SkipIcon back />}>Back</Push>
                  <Push height={28} disabled icon={<SkipIcon />}>Forward</Push>
                  <Push height={28}>Return Zero</Push>
                </ButtonGrid>
                <Line $indent={8} $height={20} $top={8}>
                  <Check checked>Finished, return</Check>
                  <Spacer />
                  <Combo label="Return point" value="Zero Point" $flat $height={21} $width={92} $margin="6px 13px 0 0" />
                </Line>
                <Line $indent={8}><Check>Only process selected graphics</Check></Line>
                <Line $indent={8}><Check>Soft limit protection</Check></Line>
                <Line $indent={8}><Check>Edge Seek Before Working</Check></Line>
                <Line $indent={6} $gap={4}>
                  Back/Forward Dis:
                  <Unit label="Distance" value="10mm" width={45} />
                  <Unit label="Speed" value="50mm/s" width={64} />
                </Line>
              </NcBody>
            </Box>

            <Box $top={5} $bottom={3}>
              <legend>Counter</legend>
              <CounterBody>
                <Counts>
                  <dt>Timer:</dt>
                  <dd>4min6s</dd>
                  <dt>Piece:</dt>
                  <dd>0</dd>
                  <dt>Plan:</dt>
                  <dd>100</dd>
                </Counts>
                <ConfigButton $height={24}><span>Config</span></ConfigButton>
              </CounterBody>
            </Box>
          </Panel>
        </Main>

        <StatusBar>
          <StatusCell $dark $width={102} $pad={7}>160.26, 2064.84</StatusCell>
          <StatusCell $width={53} $pad={2}>Stop</StatusCell>
          <StatusCell $width={152} $pad={3}>
            <Combo label="Machine position" value="X:0.000 Y:0.000" $height={23} $width={145} />
          </StatusCell>
          <StatusCell $pad={3}>Fine</StatusCell>
          <Dim htmlFor="move-dis">Move Dis</Dim>
          <MoveBox $flat $height={21} $width={59} $fill="#e9ebee" $ink="#84898f">
            <select id="move-dis"><option>10</option></select>
            <Down w={5} color="#555" />
          </MoveBox>
          <span>BMC1203</span>
        </StatusBar>
      </Window>
    </>
  );
};
